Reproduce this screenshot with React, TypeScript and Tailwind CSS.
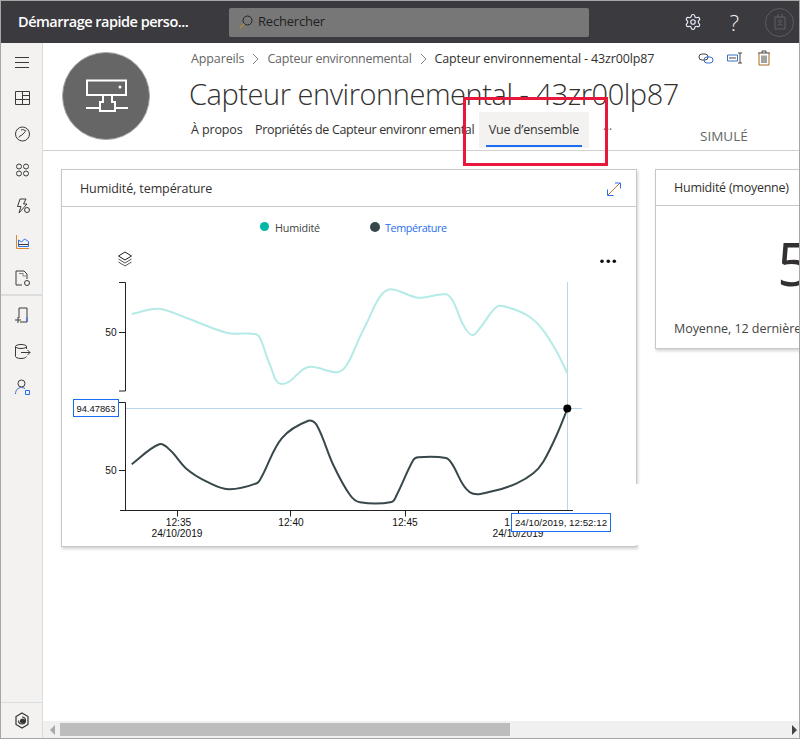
import { Settings } from 'lucide-react';

type Pt = [number, number];

const humidity: Pt[] = [
  [131.7, 314], [158.3, 308.7], [186.7, 318], [226.7, 332.7], [255, 334], [260, 338], [270, 365], [281.7, 384],
  [308.3, 367], [336.7, 372.3], [346.7, 365], [360, 336.7], [366.7, 323], [380, 296.7], [390.7, 289.3],
  [418.3, 297.7], [446, 294.3], [453.3, 301.7], [463.3, 325], [472.3, 335], [480, 328], [496.7, 306.7],
  [506.7, 307], [526.7, 315], [541.7, 328.3], [556.7, 351.7], [567.3, 373.3],
];

const temperature: Pt[] = [
  [131.7, 464.3], [159.3, 444.3], [170, 450], [186.7, 469], [206.7, 481.7], [228.3, 489.3], [256.7, 483.3],
  [261.7, 476.7], [281.7, 438.3], [308.3, 420.7], [316.7, 425], [333.3, 465], [350, 495], [360, 502.3],
  [391.7, 502], [396.7, 495], [413.3, 460], [418.3, 457.3], [446, 458], [451.7, 463.3], [470, 492.3],
  [493.3, 491], [516.7, 483.3], [533.3, 473.3], [543.3, 461.7], [556.7, 435], [567.3, 409],
];

// smooth line through the points, handles scaled to each segment's length
function smooth(p: Pt[]) {
  const tangent = (i: number) => {
    const a = p[i - 1] || p[i];
    const c = p[i + 1] || p[i];
    const dx = c[0] - a[0];
    const dy = c[1] - a[1];
    const len = Math.hypot(dx, dy) || 1;
    return [dx / len, dy / len];
  };
  let d = `M${p[0][0]} ${p[0][1]}`;
  for (let i = 0; i < p.length - 1; i++) {
    const b = p[i];
    const c = p[i + 1];
    const h = Math.hypot(c[0] - b[0], c[1] - b[1]) / 3;
    const t1 = tangent(i);
    const t2 = tangent(i + 1);
    d += ` C${(b[0] + t1[0] * h).toFixed(1)} ${(b[1] + t1[1] * h).toFixed(1)} ${(c[0] - t2[0] * h).toFixed(1)} ${(c[1] - t2[1] * h).toFixed(1)} ${c[0]} ${c[1]}`;
  }
  return d;
}

function SideIcon({ children }: { children: React.ReactNode }) {
  return (
    <div className="h-[36px] flex items-center justify-center">
      <svg width="20" height="20" viewBox="0 0 20 20" fill="none" stroke="#3a3a3a" strokeWidth="1">
        {children}
      </svg>
    </div>
  );
}

function Sidebar() {
  return (
    <aside className="w-[42px] shrink-0 bg-[#f3f2f1] border-r border-[#dcdcdc] flex flex-col pt-[1px]">
      <SideIcon>
        <path d="M3 5.500h14M3 10.500h14M3 15.500h14" />
      </SideIcon>
      <SideIcon>
        <path d="M3.500 3.500h14v13h-14zM3.500 11.500h14M10.500 3.500v13M10.500 7.500h7" />
      </SideIcon>
      <SideIcon>
        <circle cx="10.500" cy="10" r="7" />
        <path d="M7 13.500c0-2 2-1.500 3-2.500s3-3 4-4.500M9 6c2-1 4 0 4.500 1" />
      </SideIcon>
      <SideIcon>
        <circle cx="7" cy="6.500" r="2.500" />
        <circle cx="14" cy="6.500" r="2.500" />
        <circle cx="7" cy="13.500" r="2.500" />
        <circle cx="14" cy="13.500" r="2.500" />
      </SideIcon>
      <SideIcon>
        <path d="M8 3h6l-2.500 5H15l-8 9 2-6.500H5.500z" />
        <circle cx="15" cy="14" r="2.500" />
      </SideIcon>
      <SideIcon>
        <path d="M4.500 3v13.500H17" stroke="#d98a2b" />
        <path d="M6.500 14.500V8l3 2 3-3 4 2.500v5z" stroke="#2a6ef0" />
        <path d="M6.500 12.500h10" />
      </SideIcon>
      <SideIcon>
        <path d="M10 17H4V3h8l3 3v5" />
        <path d="M7 5.500h4M11 5v3h3" stroke="#888" />
        <circle cx="15" cy="15" r="2.500" />
      </SideIcon>
      <div className="border-t-2 border-[#dcdcdc] -mt-[2px] mb-[1px]" />
      <SideIcon>
        <path d="M7 13V3h8v14H8" />
        <path d="M3 15h6M6 12v6" />
        <path d="M15 12v5" stroke="#2a6ef0" />
      </SideIcon>
      <SideIcon>
        <ellipse cx="9" cy="5.500" rx="5.500" ry="2" />
        <path d="M3.500 5.500v10c0 1 2.500 2 5.500 2s5-1 5.500-2M14.500 5.500V8M9 11.500h9M15.500 9l2.500 2.500L15.500 14" />
      </SideIcon>
      <SideIcon>
        <circle cx="9.500" cy="6.500" r="3.500" />
        <path d="M3.500 17c0-4 2.500-6.500 6-6.500 1.500 0 2.500.5 3.500 1" stroke="#3a70c0" />
        <path d="M13.500 13.500h4v4h-4z" stroke="#2a6ef0" />
      </SideIcon>
      <div className="flex-1" />
      <div className="h-[36px] border-t border-[#dcdcdc] flex items-center justify-center">
        <svg width="18" height="20" viewBox="0 0 18 20" fill="none" stroke="#333" strokeWidth="1.200">
          <path d="M9 2l6 3.500v8L9 17l-6-3.500v-8z" />
          <path d="M9 6a3.500 3.500 0 1 1-3.500 3.500" />
          <circle cx="9.500" cy="10" r="2" fill="#333" />
        </svg>
      </div>
    </aside>
  );
}

function TopBar() {
  return (
    <header className="h-[42px] shrink-0 bg-[#3b3a3f] flex items-center text-white">
      <div className="w-[228px] pl-[17px] text-[14.5px] font-semibold tracking-[-0.5px] whitespace-nowrap">
        Démarrage rapide perso...
      </div>
      <div className="w-[360px] h-[29px] rounded-[2px] bg-[#777777] flex items-center pl-[10px] gap-[5px] text-[13px] text-[#1f1f1f]">
        <svg width="14" height="14" viewBox="0 0 14 14" fill="none" stroke="#222" strokeWidth="1">
          <circle cx="8.500" cy="5.500" r="4.500" />
          <path d="M5 9l-4 4" strokeWidth="1.500" stroke="#b08a30" />
        </svg>
        <span className="tracking-[-0.2px]">Rechercher</span>
      </div>
      <div className="flex-1" />
      <Settings size={18} strokeWidth={1.5} color="#e8f0ff" className="mr-[28px]" />
      <span className="text-[22px] font-light mr-[26px] text-[#f0f0f0] leading-none">?</span>
      <div className="w-[29px] h-[29px] rounded-full border border-[#5d5c62] flex items-center justify-center mr-[5px]">
        <svg width="14" height="18" viewBox="0 0 14 18" fill="none" stroke="#5f5e64" strokeWidth="1">
          <path d="M2 4h10v12H2zM5 1v4M9 1v4" />
          <circle cx="7" cy="8.500" r="1.500" />
          <path d="M4.500 13c0-2 5-2 5 0" />
        </svg>
      </div>
    </header>
  );
}

function PageHeader() {
  return (
    <div className="h-[108px] shrink-0 border-b border-[#d0d0d0] flex relative">
      <div className="w-[88px] h-[88px] rounded-full bg-[#666666] border border-[#a9a9a9] mt-[9px] ml-[19px] shrink-0 flex items-center justify-center">
        <svg width="44" height="36" viewBox="0 0 44 36" fill="none" stroke="#fff" strokeWidth="2">
          <path d="M3 2.500h39V17H3z" />
          <circle cx="36" cy="9" r="1.500" fill="#fff" stroke="none" />
          <path d="M19 17v7h-3v9h15v-9h-3v-7" />
          <path d="M2 30h14M31 30h13" />
        </svg>
      </div>
      <div className="ml-[39px] flex-1 min-w-0 relative">
        <div className="h-[32px] flex items-center pl-[2px] text-[12.5px] tracking-[-0.12px] text-[#666] whitespace-nowrap">
          <span>Appareils</span>
          <svg width="10" height="12" viewBox="0 0 10 12" fill="none" stroke="#888" className="ml-[7px] mr-[6px]">
            <path d="M2 1l5 5-5 5" />
          </svg>
          <span className="tracking-[-0.25px]">Capteur environnemental</span>
          <svg width="10" height="12" viewBox="0 0 10 12" fill="none" stroke="#888" className="ml-[7px] mr-[6px]">
            <path d="M2 1l5 5-5 5" />
          </svg>
          <span className="text-[#323130] tracking-[-0.15px]">Capteur environnemental - 43zr00lp87</span>
        </div>
        <h1 className="h-[37px] text-[29px] font-light leading-[37px] text-[#323130] tracking-[-0.45px] whitespace-nowrap">
          Capteur environnemental - 43zr00lp87
        </h1>
        <div className="flex h-[36px] pl-[2px] text-[12.5px] tracking-[-0.12px] text-[#323130] whitespace-nowrap">
          <div className="w-[64px] flex items-center">À propos</div>
          <div className="w-[224px] flex items-center tracking-[-0.34px]">Propriétés de Capteur environr emental</div>
          <div className="relative w-[110px] bg-[#f3f2f1] flex items-center justify-center">
            Vue d’ensemble
            <div className="absolute left-[7px] right-[7px] bottom-[1px] h-[2px] bg-[#1a6cf0]" />
          </div>
          <div className="ml-[14px] flex items-center text-[#555] text-[12px]">···</div>
        </div>
        <span className="absolute left-[511px] top-[83px] text-[13.5px] text-[#666]">SIMULÉ</span>
        <div className="absolute top-[6px] left-[508px] flex gap-[11px]">
          <svg width="18" height="18" viewBox="0 0 18 18" fill="none" stroke="#444" strokeWidth="1">
            <rect x="2" y="5" width="9" height="6" rx="3" />
            <rect x="7" y="8" width="9" height="6" rx="3" stroke="#3a70c0" />
          </svg>
          <svg width="18" height="18" viewBox="0 0 18 18" fill="none" stroke="#444" strokeWidth="1">
            <path d="M1.500 6h10v6h-10z" stroke="#3a70c0" />
            <path d="M3 9h7M14 4v10M12 4h4M12 14h4" />
          </svg>
          <svg width="18" height="18" viewBox="0 0 18 18" fill="none" stroke="#444" strokeWidth="1">
            <path d="M3 4h12M7 4V2h4v2" />
            <path d="M4 4v12h10V4" stroke="#a56a20" />
            <path d="M7 6.500V14M9 6.500V14M11 6.500V14" />
          </svg>
        </div>
      </div>
    </div>
  );
}

function Chart() {
  const arial = { fontFamily: '"Liberation Sans", sans-serif' };
  return (
    <svg width="575" height="300" viewBox="62 245 575 300" className="block" style={arial}>
      {/* layers icon */}
      <g fill="none" stroke="#555" strokeWidth="1">
        <path d="M125 252l6.500 4-6.500 4-6.500-4z" fill="#fff" stroke="#222" />
        <path d="M118.500 259l6.500 4 6.500-4M118.500 262l6.500 4 6.500-4" />
      </g>
      <g fill="#111">
        <circle cx="602" cy="261.300" r="1.800" />
        <circle cx="608.300" cy="261.300" r="1.800" />
        <circle cx="614.300" cy="261.300" r="1.800" />
      </g>
      {/* crosshair */}
      <path d="M567.500 282V510M125 408.500H582" stroke="#b9d5e8" strokeWidth="1" fill="none" />
      {/* axes */}
      <g stroke="#222" strokeWidth="1" fill="none">
        <path d="M119 282.500h6.500V391H119M119 332.500h6M119 402.500h6.500V510.500M119 470.500h6" />
        <path d="M120 510.500H573M177.500 510.500v6M290.500 510.500v6M405.500 510.500v6M518.500 510.500v6" />
      </g>
      <path d={smooth(humidity)} fill="none" stroke="#b5ebe6" strokeWidth="2" />
      <path d={smooth(temperature)} fill="none" stroke="#37474a" strokeWidth="2" />
      <circle cx="567.300" cy="408.500" r="4" fill="#000" />
      <g fontSize="10.200" fill="#111" textAnchor="middle">
        <text x="111" y="336">50</text>
        <text x="111" y="474">50</text>
        <text x="178.500" y="526">12:35</text>
        <text x="177" y="537">24/10/2019</text>
        <text x="291" y="526">12:40</text>
        <text x="405" y="526">12:45</text>
        <text x="507" y="526">1</text>
        <text x="518" y="537">24/10/2019</text>
      </g>
      <rect x="73.500" y="399.500" width="45" height="17" fill="#fff" stroke="#1a6cf0" />
      <text x="96" y="412" fontSize="9.400" fill="#111" textAnchor="middle">94.47863</text>
      <rect x="511.500" y="513.500" width="99" height="18" fill="#fff" stroke="#1a6cf0" />
      <text x="561" y="526" fontSize="9.750" fill="#111" textAnchor="middle">24/10/2019, 12:52:12</text>
    </svg>
  );
}

function ChartCard() {
  return (
    <section className="relative w-[576px] h-[378px] shrink-0 bg-white border border-[#c8c8c8] shadow-[1px_2px_3px_rgba(0,0,0,0.18)]">
      <div className="h-[37px] border-b border-[#c8c8c8] flex items-center justify-between pt-[2px] pl-[18px] pr-[14px] text-[12.5px] text-[#323130]">
        <span className="tracking-[-0.1px]">Humidité, température</span>
        <svg width="16" height="16" viewBox="0 0 16 16" fill="none" strokeWidth="1">
          <path d="M2 14L14 2" stroke="#b97a2b" />
          <path d="M9 2h5.500v5.500" stroke="#2a6ef0" />
          <path d="M1.500 8.500V14.500H7.500" stroke="#2a6ef0" />
        </svg>
      </div>
      <div className="h-[38px] flex items-center pt-[4px] pl-[198px] text-[10.8px] tracking-[-0.2px] text-[#444]">
        <span className="w-[9px] h-[9px] rounded-full bg-[#00b7a8] mr-[6px] -mt-[3px]" />
        <span className="w-[95px]">Humidité</span>
        <span className="w-[10px] h-[10px] rounded-full bg-[#35474a] mr-[5px] -mt-[3px]" />
        <span className="text-[#2a6ef0] tracking-[-0.4px]">Température</span>
      </div>
      <Chart />
      <div className="absolute right-[-5px] top-[314px] w-[8px] h-[61px] bg-white" />
    </section>
  );
}

function AverageCard() {
  return (
    <section className="w-[300px] h-[180px] shrink-0 bg-white border border-[#c8c8c8] shadow-[1px_2px_3px_rgba(0,0,0,0.18)]">
      <div className="h-[36px] border-b border-[#c8c8c8] flex items-center pt-[2px] pl-[18px] text-[12.5px] text-[#323130] tracking-[-0.25px]">
        Humidité (moyenne)
      </div>
      <div className="h-[114px] pl-[121px] flex items-center text-[60px] font-normal text-[#323130] leading-none">5</div>
      <div className="pl-[18px] text-[12.5px] text-[#444] tracking-[-0.05px] whitespace-nowrap">Moyenne, 12 dernières heures</div>
    </section>
  );
}

function HScrollbar() {
  return (
    <div className="h-[17px] shrink-0 bg-[#f0f0f0] flex items-center relative">
      <svg width="8" height="10" viewBox="0 0 8 10" className="ml-[6px]" fill="#a8a8a8">
        <path d="M6 0v10L1 5z" />
      </svg>
      <div className="ml-[3px] w-[450px] h-[13px] bg-[#bdbdbd]" />
      <div className="flex-1" />
      <svg width="8" height="10" viewBox="0 0 8 10" className="mr-[1px]" fill="#444">
        <path d="M2 0v10l5-5z" />
      </svg>
    </div>
  );
}

export default function App() {
  return (
    <div
      className="relative w-[800px] h-[739px] overflow-hidden bg-white border border-[#a6a6a6] flex flex-col"
      style={{ fontFamily: '"Open Sans", "Noto Sans", sans-serif' }}
    >
      <TopBar />
      <div className="flex flex-1 min-h-0">
        <Sidebar />
        <main className="flex-1 min-w-0 flex flex-col overflow-hidden">
          <PageHeader />
          <div className="flex-1 flex gap-[18px] pt-[18px] pl-[18px] overflow-hidden">
            <ChartCard />
            <AverageCard />
          </div>
          <HScrollbar />
        </main>
      </div>
      {/* red annotation from the screenshot */}
      <div className="absolute left-[462px] top-[96px] w-[145px] h-[69px] border-[3px] border-[#e8173c] pointer-events-none" />
    </div>
  );
}
